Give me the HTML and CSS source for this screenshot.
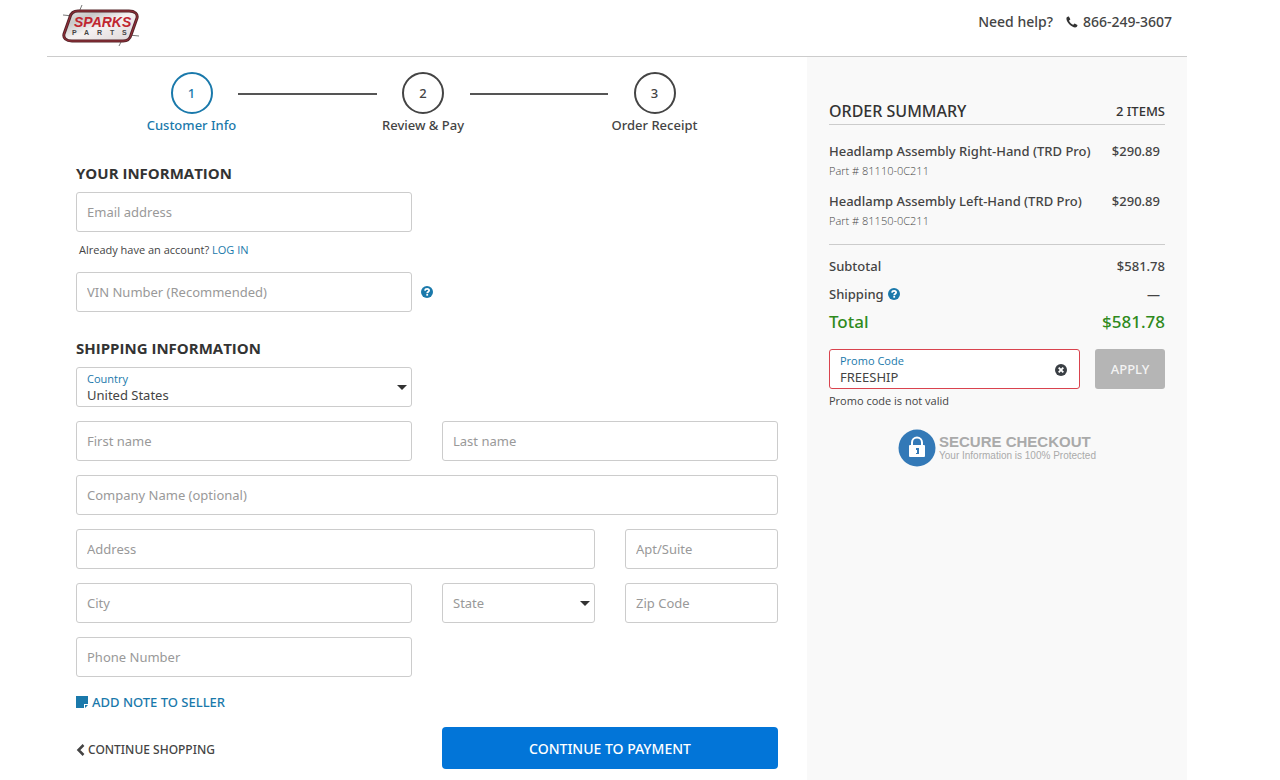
FILE: index.html
```html
<!DOCTYPE html>
<html lang="en">
    <head>
        <meta charset="UTF-8">
        <meta name="viewport" content="width=device-width, initial-scale=1">
        <title>Checkout - Sparks Parts</title>
        <link rel="stylesheet" href="styles.css">
    </head>
    <body>
        <!-- shared icons -->
        <svg class="sprite" aria-hidden="true">
            <symbol id="icon-help" viewBox="0 0 12 12">
                <circle cx="6" cy="6" r="6" fill="#1a79ab"/>
                <path d="M3.900 4.600C4.100 3.300 5 2.900 6.100 2.900c1.200 0 2 .7 2 1.600C8.100 5.700 6.200 5.700 6.200 7.200" fill="none" stroke="#fff" stroke-width="1.800"/>
                <rect x="5.300" y="8" width="1.800" height="1.700" fill="#fff"/>
            </symbol>
        </svg>
        <div class="container">
            <header class="header">
                <a href="#" class="logo" aria-label="Sparks Parts">
                    <svg width="80" height="42" viewBox="0 0 80 42">
                        <defs>
                            <linearGradient id="plate" x1="0" y1="0" x2="1" y2="1">
                                <stop offset="0" stop-color="#e8e6e6"/>
                                <stop offset=".25" stop-color="#c9c9c9"/>
                                <stop offset=".5" stop-color="#f5f1f1"/>
                                <stop offset="1" stop-color="#dcd6d6"/>
                            </linearGradient>
                        </defs>
                        <path d="M1 10l10 1M20 0l-3 7M67 30l10 1M60 35l-3 6" stroke="#777" stroke-width="1"/>
                        <path d="M16 6H67C73 6 76 9 75 13L69 30C68 34 65 36 61 36H10C4 36 1 33 2 29L8 12C9 8 12 6 16 6Z" fill="url(#plate)" stroke="#54262b" stroke-width="3"/>
                        <path d="M16 6H67C73 6 76 9 75 13L69 30C68 34 65 36 61 36H10C4 36 1 33 2 29L8 12C9 8 12 6 16 6Z" fill="none" stroke="#9c2c37" stroke-width="1"/>
                        <text x="12" y="22" class="logo-name">SPARKS</text>
                        <text x="10 22 35 48 60" y="30" class="logo-sub">PARTS</text>
                    </svg>
                </a>
                <div class="help">
                    <span>Need help?</span>
                    <a href="tel:8662493607">
                        <svg width="12" height="12" viewBox="0 0 12 12" aria-hidden="true"><path d="M.8 1.300C1.400.7 2.500.3 2.900.5L4.300 3.300C4.200 4 3.100 4.300 3.100 4.700 3.400 6 5.900 8.500 7.200 8.800 7.700 8.800 8 7.700 8.600 7.600L11.400 9.100C11.500 9.800 11.200 10.600 10.600 11 9.500 11.800 8 11.500 6.300 10.600 4 9.400 2.200 7.400 1.100 5.200.4 3.700.2 2.300.8 1.300Z" fill="#333"/></svg>
                        866-249-3607
                    </a>
                </div>
            </header>
            <div class="content">
                <main class="main">
                    <ol class="steps">
                        <li class="step active"><span class="num">1</span>Customer Info</li>
                        <li class="line" aria-hidden="true"></li>
                        <li class="step"><span class="num">2</span>Review &amp; Pay</li>
                        <li class="line" aria-hidden="true"></li>
                        <li class="step"><span class="num">3</span>Order Receipt</li>
                    </ol>
                    <form action="#">
                        <h2>YOUR INFORMATION</h2>
                        <div class="grid">
                            <input class="field half" type="email" placeholder="Email address" aria-label="Email address">
                        </div>
                        <p class="account">Already have an account? <a href="#">LOG IN</a></p>
                        <div class="grid vin">
                            <input class="field half" type="text" placeholder="VIN Number (Recommended)" aria-label="VIN Number">
                            <button type="button" class="tip" aria-label="What is a VIN?"><svg width="12" height="12"><use href="#icon-help"/></svg></button>
                        </div>

                        <h2>SHIPPING INFORMATION</h2>
                        <div class="grid">
                            <div class="floating select half">
                                <label for="country">Country</label>
                                <select class="field" id="country">
                                    <option>United States</option>
                                    <option>Canada</option>
                                </select>
                            </div>
                            <input class="field half first" type="text" placeholder="First name" aria-label="First name">
                            <input class="field half" type="text" placeholder="Last name" aria-label="Last name">
                            <input class="field full" type="text" placeholder="Company Name (optional)" aria-label="Company Name">
                            <input class="field wide" type="text" placeholder="Address" aria-label="Address">
                            <input class="field" type="text" placeholder="Apt/Suite" aria-label="Apt/Suite">
                            <input class="field half" type="text" placeholder="City" aria-label="City">
                            <div class="select">
                                <select class="field empty" aria-label="State">
                                    <option>State</option>
                                    <option>California</option>
                                    <option>Texas</option>
                                </select>
                            </div>
                            <input class="field" type="text" placeholder="Zip Code" aria-label="Zip Code">
                            <input class="field half" type="tel" placeholder="Phone Number" aria-label="Phone Number">
                        </div>
                        <a href="#" class="note">
                            <svg width="12" height="12" viewBox="0 0 12 12" aria-hidden="true"><path d="M0 0H12V8H8V12H0ZM9 9H12L9 12Z" fill="#1a79ab"/></svg>
                            ADD NOTE TO SELLER
                        </a>
                        <div class="grid actions">
                            <a href="#" class="back half">
                                <svg width="9" height="12" viewBox="0 0 9 12" aria-hidden="true"><path d="M7.500 1L2.500 6l5 5" fill="none" stroke="#444" stroke-width="2.500"/></svg>
                                CONTINUE SHOPPING
                            </a>
                            <button type="submit" class="pay half">CONTINUE TO PAYMENT</button>
                        </div>
                    </form>
                </main>
                <aside class="summary">
                    <div class="summary-head">
                        <h3>ORDER SUMMARY</h3>
                        <span>2 ITEMS</span>
                    </div>
                    <ul class="items">
                        <li>
                            <div class="row"><span>Headlamp Assembly Right-Hand (TRD Pro)</span><span>$290.89</span></div>
                            <div class="part">Part # 81110-0C211</div>
                        </li>
                        <li>
                            <div class="row"><span>Headlamp Assembly Left-Hand (TRD Pro)</span><span>$290.89</span></div>
                            <div class="part">Part # 81150-0C211</div>
                        </li>
                    </ul>
                    <dl class="totals">
                        <div class="row"><dt>Subtotal</dt><dd>$581.78</dd></div>
                        <div class="row">
                            <dt>Shipping <button type="button" class="tip" aria-label="About shipping"><svg width="12" height="12"><use href="#icon-help"/></svg></button></dt>
                            <dd class="dash">—</dd>
                        </div>
                        <div class="row total"><dt>Total</dt><dd>$581.78</dd></div>
                    </dl>
                    <form action="#" class="promo">
                        <div class="floating code">
                            <label for="promo">Promo Code</label>
                            <input class="field error" id="promo" type="text" value="FREESHIP" aria-describedby="promo-error">
                            <button type="button" class="clear" aria-label="Clear promo code">
                                <svg width="12" height="12" viewBox="0 0 12 12"><circle cx="6" cy="6" r="6" fill="#3a3f44"/><path d="M3.700 3.700l4.600 4.600M8.300 3.700L3.700 8.300" stroke="#fff" stroke-width="1.900"/></svg>
                            </button>
                        </div>
                        <button type="submit" class="apply">APPLY</button>
                    </form>
                    <p class="promo-error" id="promo-error">Promo code is not valid</p>
                    <div class="secure">
                        <svg width="38" height="38" viewBox="0 0 38 38" aria-hidden="true">
                            <circle cx="19" cy="19" r="18.500" fill="#3379b7"/>
                            <path d="M14 17v-3.500a5 5 0 0 1 10 0V17" fill="none" stroke="#fff" stroke-width="2"/>
                            <rect x="11" y="16" width="16" height="12" rx="1" fill="#fff"/>
                            <path d="M18 19h3v6h-3v-1h1v-3h-1z" fill="#3379b7"/>
                        </svg>
                        <div>
                            <strong>SECURE CHECKOUT</strong>
                            <span>Your Information is 100% Protected</span>
                        </div>
                    </div>
                </aside>
            </div>
        </div>
    </body>
</html>
```
FILE: styles.css
```css
*{
    box-sizing: border-box;
    margin: 0;
    padding: 0;
}
body{
    padding-right: 46px;
    font: 500 13px/20px "Noto Sans", "Open Sans", sans-serif;
    color: #444;
    background: #fff;
}
a{
    color: #1a79ab;
    text-decoration: none;
}
ul,ol{
    list-style: none;
}
button,input,select{
    font: inherit;
}
button{
    border: 0;
    background: none;
    cursor: pointer;
}
svg{
    display: block;
    flex: none;
}
.sprite{
    position: absolute;
    width: 0;
    height: 0;
}
.container{
    max-width: 1140px;
    min-height: 100vh;
    margin: 0 auto;
    display: flex;
    flex-direction: column;
}

/* header */
.header{
    display: flex;
    justify-content: space-between;
    align-items: flex-start;
    height: 57px;
    padding: 5px 15px 0;
    border-bottom: 1px solid #ccc;
}
.logo-name{
    font: italic bold 14px "Liberation Sans", sans-serif;
    fill: #c02630;
}
.logo-sub{
    font: bold 7px "Liberation Sans", sans-serif;
    fill: #444;
}
.help{
    display: flex;
    gap: 13px;
    padding-top: 7px;
    font-size: 14px;
}
.help a{
    display: flex;
    align-items: center;
    gap: 5px;
    color: #444;
}

.content{
    flex: 1;
    display: grid;
    grid-template-columns: 2fr 1fr;
}
.main{
    padding: 15px 29px 11px;
}

/* steps */
.steps{
    display: flex;
    padding: 0 77px 2px 69px;
}
.step{
    display: flex;
    flex-direction: column;
    align-items: center;
    gap: 1px;
    width: 93px;
    white-space: nowrap;
}
.num{
    width: 42px;
    height: 42px;
    border: 2px solid #444;
    border-radius: 50%;
    line-height: 38px;
    text-align: center;
}
.step.active{
    color: #1a79ab;
}
.active .num{
    border-color: #1a79ab;
}
.line{
    flex: 1;
    height: 2px;
    margin-top: 21px;
    background: #555;
}

/* form */
h2{
    margin: 26px 0 8px;
    font: 700 15px/21px "Open Sans", sans-serif;
    color: #333;
}
.grid{
    display: grid;
    grid-template-columns: repeat(4, 1fr);
    gap: 14px 30px;
}
.half{
    grid-column: span 2;
}
.wide{
    grid-column: span 3;
}
.full{
    grid-column: span 4;
}
.first{
    grid-column: 1 / span 2;
}
.field{
    width: 100%;
    min-width: 0;
    height: 40px;
    padding: 0 10px;
    border: 1px solid #ccc;
    border-radius: 3px;
    outline: 0;
    font-size: 13px;
    font-weight: 400;
    color: #444;
    background: #fff;
}
.field.half,.field.full,.field.wide{
    width: auto;
}
.field::placeholder,.field.empty{
    color: #999;
}
.field:focus{
    border-color: #1a79ab;
}
.select,.floating{
    position: relative;
}
.select select{
    appearance: none;
}
.select::after{
    content: "";
    position: absolute;
    top: 18px;
    right: 5px;
    border: 5px solid transparent;
    border-top-color: #333;
    border-bottom: 0;
    pointer-events: none;
}
.floating label,.account,.promo-error,.part{
    font-family: "Open Sans", sans-serif;
    font-size: 11px;
    font-weight: 400;
}
.floating label{
    position: absolute;
    top: 4px;
    left: 11px;
    line-height: 16px;
    color: #1a79ab;
}
.floating .field{
    padding-top: 16px;
}
.account{
    padding: 8px 3px 12px;
}
.vin{
    align-items: center;
}
.vin .tip{
    margin-left: -21px;
}
.tip{
    width: 12px;
    height: 12px;
}
.note{
    display: flex;
    align-items: center;
    gap: 4px;
    margin: 15px 0;
}
.actions{
    align-items: center;
}
.back{
    display: flex;
    align-items: center;
    gap: 3px;
    padding-top: 4px;
    font-size: 12px;
    color: #444;
}
.pay{
    height: 42px;
    padding-top: 2px;
    border-radius: 4px;
    font-size: 14px;
    color: #fff;
    background: #0275d8;
}

/* order summary */
.summary{
    padding: 44px 22px;
    background: #f9f9f9;
}
.row,.summary-head{
    display: flex;
    justify-content: space-between;
}
.summary-head{
    padding-bottom: 2px;
    border-bottom: 1px solid #ccc;
    color: #333;
}
.summary-head h3{
    font-size: 16px;
    line-height: 21px;
    font-weight: 500;
}
.items{
    padding: 16px 0 3px;
    border-bottom: 1px solid #ccc;
}
.items li{
    margin-bottom: 10px;
}
.items .row{
    padding-right: 5px;
    white-space: nowrap;
}
.part{
    font-weight: 300;
}
.totals{
    padding: 11px 0 12px;
}
.totals .row{
    margin-bottom: 8px;
}
.totals dt{
    display: flex;
    align-items: center;
    gap: 4px;
}
.totals .dash{
    padding-right: 5px;
}
.totals .total{
    margin-bottom: 5px;
    font-size: 17px;
    color: #2f8a1c;
}
.promo{
    display: flex;
    gap: 15px;
}
.code{
    flex: 1;
}
.field.error{
    border-color: #d9434e;
}
.clear{
    position: absolute;
    top: 15px;
    right: 13px;
}
.apply{
    width: 70px;
    height: 40px;
    border-radius: 3px;
    color: #f3f3f3;
    background: #b5b5b5;
}
.promo-error{
    padding-top: 2px;
}
.secure{
    display: flex;
    justify-content: center;
    align-items: center;
    gap: 3px;
    margin-top: 18px;
    font-family: "Liberation Sans", sans-serif;
    color: #aaa;
}
.secure strong,.secure span{
    display: block;
    font-size: 15px;
    line-height: 16px;
}
.secure span{
    font-size: 10px;
    font-weight: 400;
    line-height: 12px;
}

@media (max-width: 900px){
    body{
        padding-right: 0;
    }
    .content{
        grid-template-columns: 1fr;
    }
    .steps{
        padding: 0;
    }
}
```
